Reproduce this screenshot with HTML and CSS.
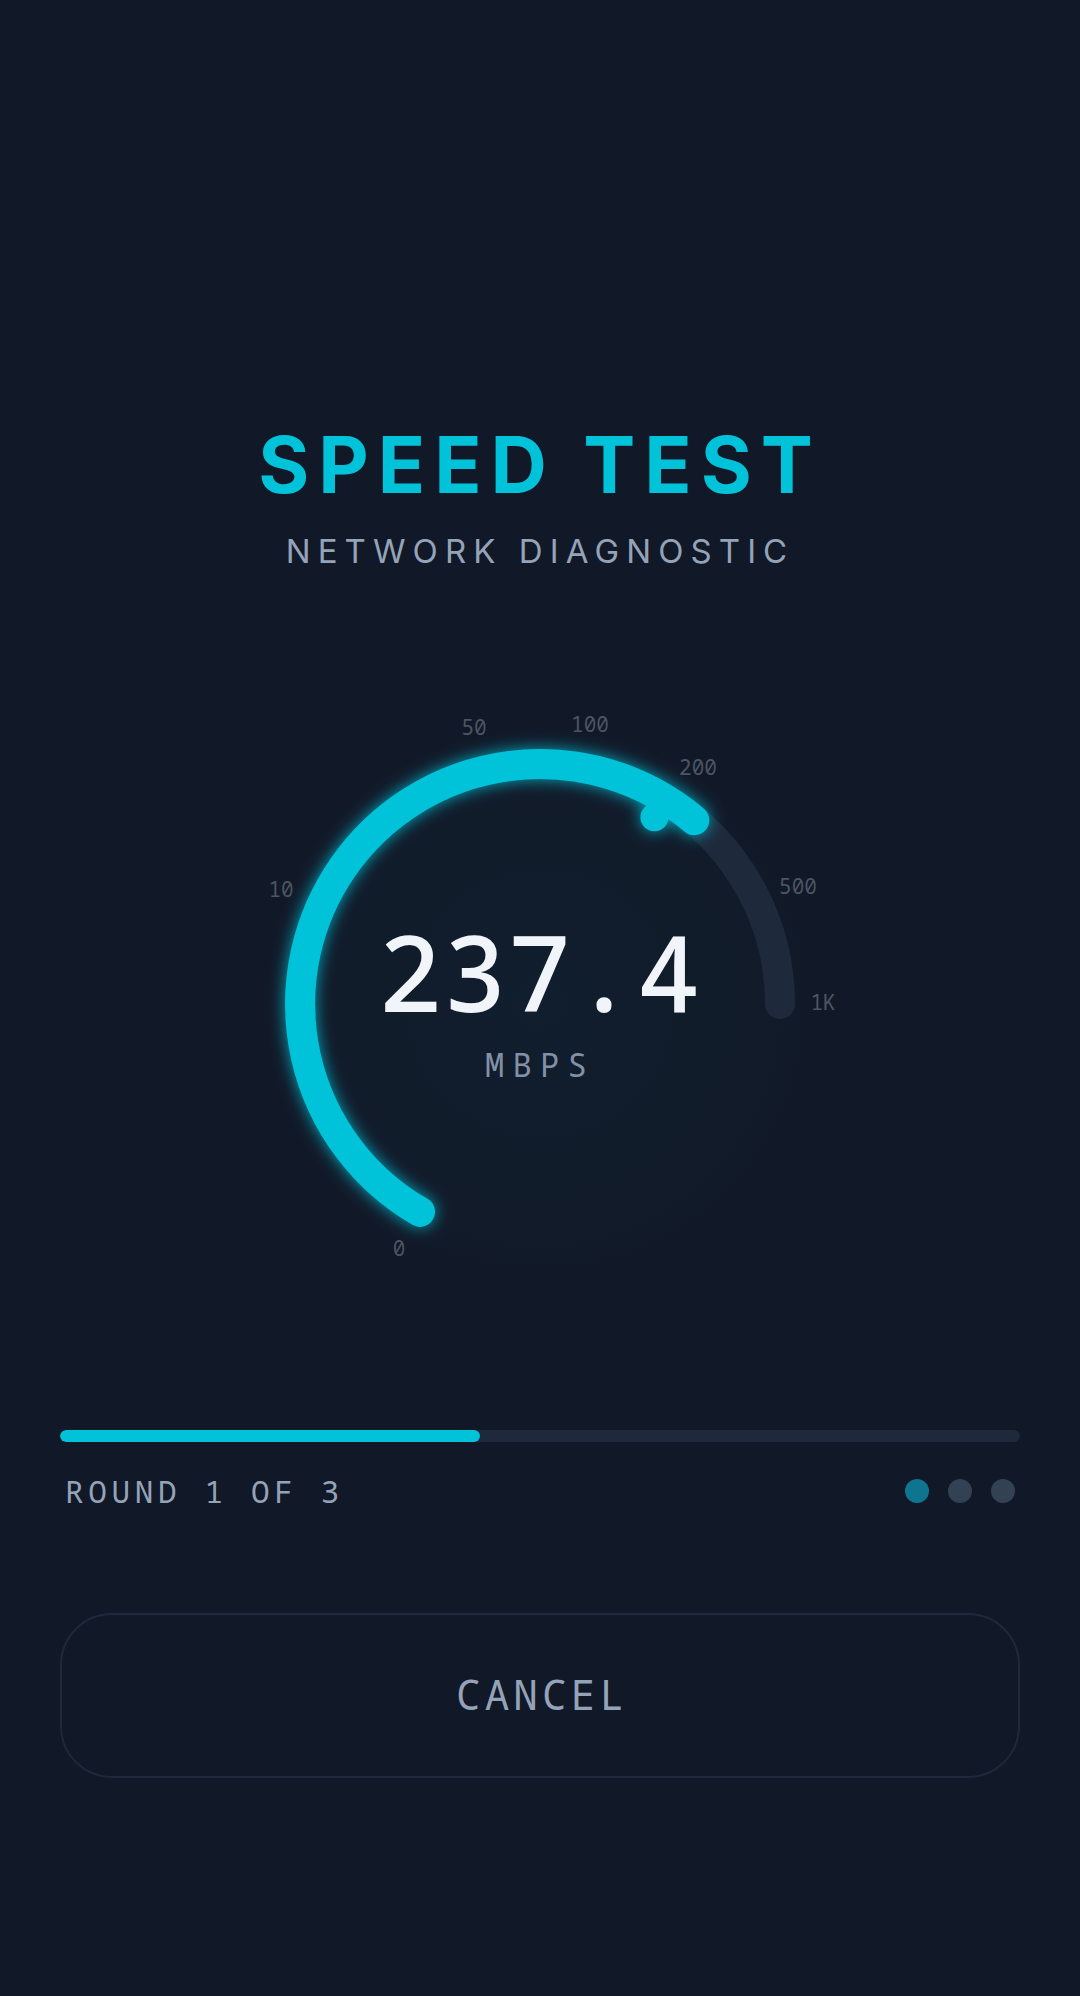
FILE: index.html
```html
<!DOCTYPE html>
<html lang="en">
<head>
<meta charset="utf-8">
<title>Speed Test</title>
<link rel="stylesheet" href="styles.css">
</head>
<body>
<main class="screen">
  <header class="heading">
    <h1 class="title">SPEED TEST</h1>
    <p class="subtitle">NETWORK DIAGNOSTIC</p>
  </header>

  <section class="gauge">
    <svg class="dial" width="640" height="640" viewBox="0 0 640 640">
      <defs>
        <filter id="glow" x="-30%" y="-30%" width="160%" height="160%">
          <feGaussianBlur in="SourceGraphic" stdDeviation="8" result="blur"/>
          <feColorMatrix in="blur" type="matrix" values="1 0 0 0 0  0 1 0 0 0  0 0 1 0 0  0 0 0 0.85 0" result="soft"/>
          <feMerge>
            <feMergeNode in="soft"/>
            <feMergeNode in="SourceGraphic"/>
          </feMerge>
        </filter>
      </defs>
      <path class="track" d="M 200 527.85 A 240 240 0 1 1 560 320"/>
      <g filter="url(#glow)">
        <path class="value-arc" d="M 200 527.85 A 240 240 0 1 1 474.3 136.15"/>
        <circle class="needle-dot" cx="434.4" cy="133.3" r="14"/>
      </g>
      <g class="ticks">
        <text x="179" y="564">0</text>
        <text x="61" y="205">10</text>
        <text x="254" y="43">50</text>
        <text x="370" y="40">100</text>
        <text x="478" y="83">200</text>
        <text x="578" y="202">500</text>
        <text x="603" y="318">1K</text>
      </g>
    </svg>
    <div class="readout">
      <div class="value">237.4</div>
      <div class="unit">MBPS</div>
    </div>
  </section>

  <section class="progress">
    <div class="bar"><div class="fill" style="width:43.7%"></div></div>
    <div class="round-row">
      <span class="round">ROUND 1 OF 3</span>
      <div class="dots">
        <span class="dot active"></span>
        <span class="dot"></span>
        <span class="dot"></span>
      </div>
    </div>
  </section>

  <button class="cancel" type="button">CANCEL</button>
</main>
</body>
</html>
```

FILE: styles.css
```css
html, body {
  margin: 0;
  padding: 0;
  background: #111827;
}

body {
  width: 1080px;
  min-height: 1996px;
  font-family: Inter, "Noto Sans", sans-serif;
}

.screen {
  display: flex;
  flex-direction: column;
  padding: 426px 60px 0;
}

.heading {
  display: flex;
  flex-direction: column;
  align-items: center;
}

.title {
  margin: 0;
  font-family: Inter, "Noto Sans", sans-serif;
  font-weight: 700;
  font-size: 78px;
  line-height: 1;
  letter-spacing: 0.115em;
  color: #00c3da;
}

.subtitle {
  margin: 31px 0 0;
  font-family: Inter, "Noto Sans", sans-serif;
  font-weight: 400;
  font-size: 33px;
  line-height: 1;
  letter-spacing: 0.215em;
  color: #94a3b8;
}

.gauge {
  margin-top: 116px;
  align-self: center;
  width: 640px;
  height: 640px;
  display: grid;
  place-items: center;
  background: radial-gradient(circle at center, rgba(0, 195, 218, 0.035) 0, rgba(0, 195, 218, 0.02) 200px, rgba(17, 24, 39, 0) 320px);
}

.dial {
  grid-area: 1 / 1;
  overflow: visible;
}

.track {
  fill: none;
  stroke: #1e293b;
  stroke-width: 30;
  stroke-linecap: round;
}

.value-arc {
  fill: none;
  stroke: #00c3da;
  stroke-width: 30;
  stroke-linecap: round;
}

.needle-dot {
  fill: #00c3da;
}

.ticks text {
  font-family: "Noto Sans Mono", "DejaVu Sans Mono", monospace;
  font-size: 21px;
  fill: #4b5563;
  text-anchor: middle;
  dominant-baseline: central;
}

.readout {
  grid-area: 1 / 1;
  display: flex;
  flex-direction: column;
  align-items: center;
  padding-bottom: 10px;
  font-family: "Noto Sans Mono", "DejaVu Sans Mono", monospace;
}

.value {
  font-size: 106px;
  line-height: 1;
  font-weight: 500;
  letter-spacing: 0.01em;
  color: #f1f5f9;
}

.unit {
  margin-top: 25px;
  font-size: 32px;
  line-height: 1;
  letter-spacing: 0.26em;
  color: #8391a7;
}

.progress {
  margin-top: 106px;
  display: flex;
  flex-direction: column;
}

.bar {
  height: 12px;
  border-radius: 6px;
  background: #1e293b;
  overflow: hidden;
}

.fill {
  height: 100%;
  border-radius: 6px;
  background: #00c3da;
}

.round-row {
  margin-top: 29px;
  height: 40px;
  padding: 0 5px 0 5px;
  display: flex;
  align-items: center;
  justify-content: space-between;
}

.round {
  font-family: "Noto Sans Mono", "DejaVu Sans Mono", monospace;
  font-size: 31px;
  line-height: 40px;
  letter-spacing: 0.15em;
  color: #94a3b8;
}

.dots {
  display: flex;
  gap: 19px;
}

.dot {
  width: 24px;
  height: 24px;
  border-radius: 50%;
  background: #334155;
}

.dot.active {
  background: #0e7490;
}

.cancel {
  margin-top: 102px;
  box-sizing: border-box;
  height: 165px;
  width: 100%;
  border: 2px solid #1e293b;
  border-radius: 52px;
  background: transparent;
  font-family: "Noto Sans Mono", "DejaVu Sans Mono", monospace;
  font-size: 41px;
  letter-spacing: 0.1em;
  color: #94a3b8;
  padding: 0 0 4px 0.1em;
}
```
